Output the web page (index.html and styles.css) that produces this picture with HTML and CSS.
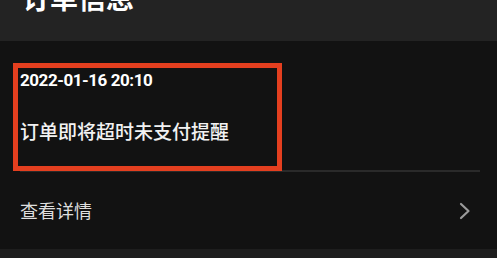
FILE: index.html
```html
<!DOCTYPE html>
<html lang="zh-CN">
<head>
<meta charset="utf-8">
<title>订单信息</title>
<link rel="stylesheet" href="styles.css">
</head>
<body>
<header class="topbar">
  <h1 class="title">订单信息</h1>
</header>
<main class="panel">
  <div class="highlight" aria-hidden="true"></div>
  <div class="message">
    <div class="msg-time">2022-01-16 20:10</div>
    <div class="msg-text">订单即将超时未支付提醒</div>
  </div>
  <div class="divider"></div>
  <div class="detail-row">
    <span class="detail-label">查看详情</span>
    <svg class="chevron" width="12" height="18" viewBox="0 0 12 18" aria-hidden="true">
      <path d="M2 2 L9.5 9 L2 16" fill="none" stroke="#9a9a9a" stroke-width="2.2" stroke-linecap="round" stroke-linejoin="round"/>
    </svg>
  </div>
</main>
<footer class="bottombar"></footer>
</body>
</html>
```
FILE: styles.css
```css
html, body {
  margin: 0;
  padding: 0;
}
body {
  width: 497px;
  height: 258px;
  overflow: hidden;
  background: #121212;
  color: #f2f2f2;
  font-family: "Noto Sans CJK SC", "Noto Sans", sans-serif;
}
.topbar {
  height: 41px;
  background: #232323;
  overflow: hidden;
}
.title {
  margin: -17px 0 0 0;
  padding-left: 22px;
  font-size: 28px;
  line-height: 28px;
  font-weight: 700;
  color: #ffffff;
}
.panel {
  position: relative;
  padding: 29px 17px 30px 20px;
}
.highlight {
  position: absolute;
  left: 13px;
  top: 22px;
  width: 259px;
  height: 98px;
  border: 5px solid #e43f1f;
}
.msg-time {
  font-family: Roboto, "Liberation Sans", sans-serif;
  font-weight: 700;
  font-size: 17px;
  line-height: 20px;
  letter-spacing: -0.45px;
  color: #ffffff;
}
.msg-text {
  margin-top: 31px;
  font-size: 19px;
  line-height: 19px;
  font-weight: 500;
  color: #f2f2f2;
}
.divider {
  margin-top: 30px;
  height: 2px;
  background: #2a2a2a;
}
.detail-row {
  margin-top: 29px;
  display: flex;
  align-items: center;
  justify-content: space-between;
  height: 18px;
}
.detail-label {
  font-size: 18px;
  line-height: 18px;
  color: #dedede;
}
.chevron {
  margin-right: 9px;
  margin-top: 2px;
}
.bottombar {
  height: 20px;
  background: #1e1e1e;
}
```
